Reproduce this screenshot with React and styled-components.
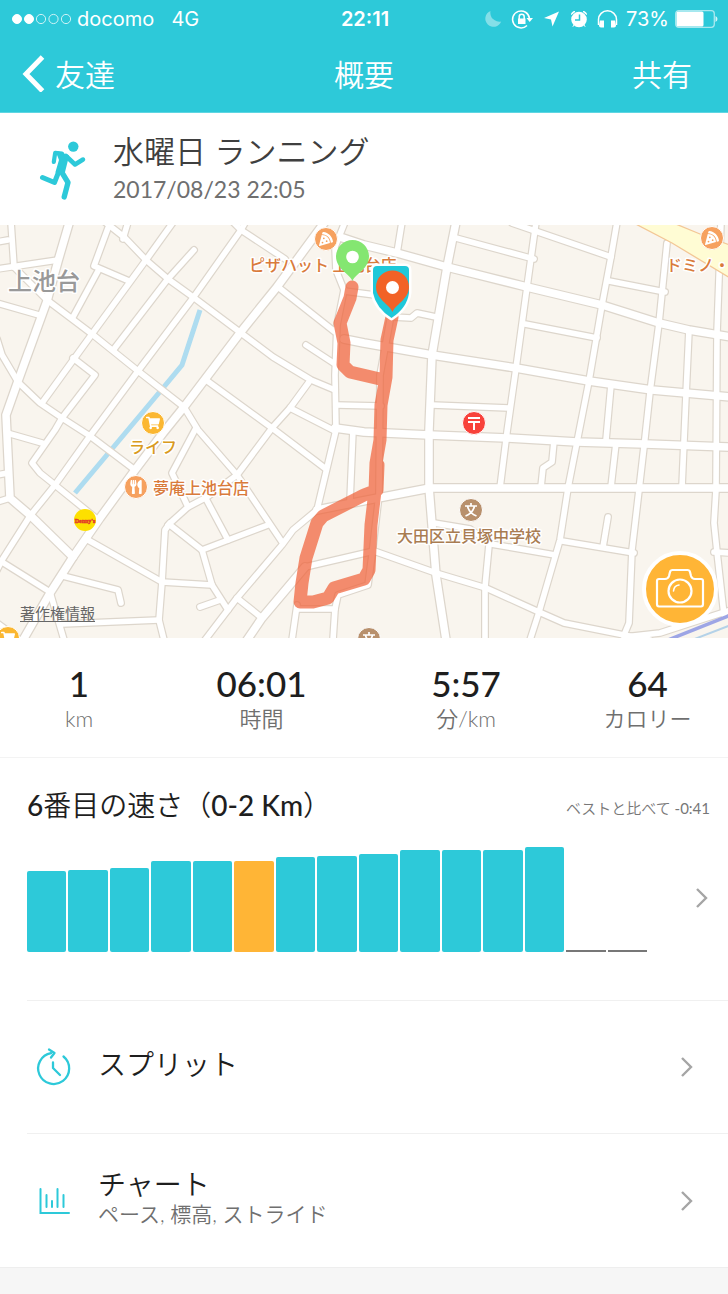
import React from "react";
import styled, { createGlobalStyle } from "styled-components";
import { FaPizzaSlice, FaShoppingCart, FaUtensils } from "react-icons/fa";

const teal = "#2dc9d9";
const amber = "#ffb536";

const GlobalStyle = createGlobalStyle`
  * { box-sizing: border-box; }
  body {
    margin: 0;
    background: #f6f6f6;
    color: #1e1e1e;
    font-family: Lato, "Noto Sans CJK JP", sans-serif;
    font-weight: 350;
  }
  button {
    border: 0;
    padding: 0;
    background: none;
    color: inherit;
    font: inherit;
    text-align: left;
    cursor: pointer;
  }
`;

const Page = styled.main`
  background: #fff;
`;

const TopBar = styled.header`
  background: ${teal};
  color: #fff;
  border-bottom: 1px solid #5fd6e2;
`;

const StatusBar = styled.div`
  display: grid;
  grid-template-columns: 1fr auto 1fr;
  align-items: center;
  height: 37px;
  padding: 0 10px 0 12px;
  font-family: Inter, sans-serif;
  font-size: 20px;
  font-weight: 400;
`;

const StatusGroup = styled.div`
  display: flex;
  align-items: center;
  justify-content: ${(p) => (p.$end ? "flex-end" : "flex-start")};
  gap: ${(p) => p.$gap}px;
`;

const Clock = styled.time`
  font-weight: 600;
`;

const NavBar = styled.nav`
  display: grid;
  grid-template-columns: 1fr auto 1fr;
  align-items: center;
  height: 75px;
  padding: 0 22px 4px;
  font-size: 30px;
`;

const NavButton = styled.button`
  display: flex;
  align-items: center;
  gap: 10px;
  justify-self: ${(p) => (p.$end ? "end" : "start")};
  padding-right: ${(p) => (p.$end ? 14 : 0)}px;
`;

const NavTitle = styled.h1`
  margin: 0;
  font-size: 30px;
  font-weight: 350;
`;

const Activity = styled.section`
  display: flex;
  align-items: center;
  gap: 25px;
  height: 112px;
  padding: 0 40px 0 38px;
`;

const ActivityTitle = styled.h2`
  margin: 0;
  font-size: 31px;
  line-height: 40px;
  font-weight: 350;
  color: #3f3f3f;
`;

const ActivityDate = styled.time`
  display: block;
  font-size: 23px;
  line-height: 36px;
  font-weight: 400;
  color: #6f6f6f;
`;

const MapPanel = styled.section`
  position: relative;
  height: 413px;
  background: #f9f5ee;
`;

const MapCanvas = styled.svg`
  display: block;
  width: 100%;
  height: 100%;
`;

const PlaceLabel = styled.text`
  font-family: "Noto Sans CJK JP", sans-serif;
  font-size: ${(p) => p.$size}px;
  font-weight: 500;
  fill: ${(p) => p.$color};
  stroke: #fff;
  stroke-width: 3px;
  stroke-linejoin: round;
  paint-order: stroke;
`;

const LegalLink = styled.a`
  position: absolute;
  left: 20px;
  bottom: 14px;
  font-family: "Noto Sans CJK JP", sans-serif;
  font-size: 15px;
  line-height: 22px;
  font-weight: 400;
  color: #666;
  text-underline-offset: 2px;
`;

const CameraButton = styled.button`
  position: absolute;
  right: 10px;
  bottom: 11px;
  display: grid;
  place-items: center;
  width: 76px;
  height: 76px;
  border: 4px solid #fff;
  border-radius: 50%;
  background: ${amber};
`;

const Stats = styled.dl`
  display: grid;
  grid-template-columns: 158fr 207fr 202fr 161fr;
  height: 120px;
  margin: 0;
  padding-top: 24px;
  border-bottom: 1px solid #f3f3f3;
  text-align: center;
`;

const Stat = styled.div`
  display: flex;
  flex-direction: column-reverse;
  justify-content: flex-end;
`;

const StatValue = styled.dd`
  margin: 0;
  font-size: 35px;
  line-height: 42px;
  font-weight: 500;
`;

const StatLabel = styled.dt`
  font-size: 22px;
  line-height: 30px;
  color: #6f6f6f;
`;

const Ranking = styled.section`
  height: 242px;
  padding: 28px 18px 0 27px;
`;

const RankingHead = styled.div`
  display: flex;
  justify-content: space-between;
  align-items: center;
`;

const RankingTitle = styled.h2`
  margin: 0;
  font-size: 28px;
  line-height: 38px;
  font-weight: 500;

  span { font-weight: 350; }
`;

const Compare = styled.span`
  padding-top: 4px;
  font-size: 15px;
  font-weight: 400;
  color: #777;

  span { font-weight: 350; }
`;

const ChartButton = styled.button`
  display: flex;
  align-items: center;
  justify-content: space-between;
  gap: 47px;
  width: 100%;
  padding-top: 20px;
`;

const Bars = styled.div`
  flex: 1;
  display: flex;
  align-items: flex-end;
  gap: 2px;
  height: 108px;
`;

const Bar = styled.span`
  flex: 1;
  border-radius: ${(p) => (p.$empty ? 0 : 2)}px;
  background: ${(p) => (p.$empty ? "#777" : p.$active ? amber : teal)};
`;

const Row = styled.button`
  display: flex;
  align-items: center;
  width: calc(100% - 27px);
  height: ${(p) => p.$height}px;
  margin-left: 27px;
  padding: 0 33px 0 8px;
  border-top: 1px solid #f0f0f0;
`;

const RowText = styled.span`
  flex: 1;
  display: flex;
  flex-direction: column;
  padding: 0 0 6px 27px;
`;

const RowTitle = styled.span`
  font-size: 28px;
  line-height: 32px;
`;

const RowNote = styled.span`
  font-size: 21px;
  line-height: 28px;
  color: #6f6f6f;
`;

const PageEnd = styled.footer`
  height: 27px;
  background: #f6f6f6;
  border-top: 1px solid #eee;
`;

const Chevron = () => (
  <svg width="16" height="24" viewBox="0 0 16 24" fill="none" stroke="#a5a5a5" strokeWidth="2.4" aria-hidden="true">
    <path d="M3 3 L12 12 L3 21" />
  </svg>
);

const Signal = () => (
  <svg width="59" height="12" viewBox="0 0 59 12" stroke="#fff" aria-hidden="true">
    <circle cx="5" cy="6" r="4.5" fill="#fff" />
    <circle cx="17" cy="6" r="4.5" fill="#fff" />
    <g fill="none" strokeWidth=".9" opacity=".85">
      <circle cx="29" cy="6" r="4.6" />
      <circle cx="41.500" cy="6" r="4.6" />
      <circle cx="54" cy="6" r="4.6" />
    </g>
  </svg>
);

const StatusIcons = () => (
  <svg width="136" height="24" viewBox="484 6 136 24" aria-hidden="true">
    <path d="M490.500 10 A8.200 8.200 0 1 0 501.200 20.500 A9 9 0 0 1 490.500 10Z" fill="#84dfe8" />
    <g fill="none" stroke="#fff" strokeWidth="1.500">
      <path d="M527 24.500 A8.500 8.500 0 1 1 529.500 17.500" />
      <path d="M519.200 18 V15.800 A2.500 2.500 0 0 1 524.200 15.800 V18" />
    </g>
    <path d="M518 17.500h7.500v5.500h-7.500z M526.500 17h6.500l-3.300 4z" fill="#fff" />
    <path d="M559 10.500 L552.500 25.500 L551 18.500 L544 17Z" fill="#fff" />
    <circle cx="579" cy="18.500" r="7.800" fill="#fff" />
    <path d="M571.500 13.500 a3 3 0 0 1 3.500-3z M586.500 13.500 a3 3 0 0 0-3.500-3z M574 24l-1.200 1.800 M584 24l1.200 1.800" fill="#fff" stroke="#fff" />
    <path d="M579.500 13.500 V19 H575" fill="none" stroke={teal} strokeWidth="1.500" />
    <path d="M598.500 24 V18.500 A9 8.700 0 0 1 616.500 18.500 V24" fill="none" stroke="#fff" strokeWidth="1.500" />
    <path d="M600 19.500h4v7h-3q-2 0-2-2z M611 19.500h4l1 5q0 2-2 2h-3z" fill="#fff" />
  </svg>
);

const Battery = () => (
  <svg width="43" height="18" viewBox="0 0 43 18" aria-hidden="true">
    <rect x=".7" y=".7" width="38.600" height="16.600" rx="3" fill="none" stroke="#a8e8ef" strokeWidth="1.300" />
    <rect x="1.500" y="1.500" width="27" height="15" rx="1.500" fill="#fff" />
    <path d="M40.500 6v6q2-1 2-3t-2-3" fill="#d5f4f7" />
  </svg>
);

const Back = () => (
  <svg width="23" height="38" viewBox="0 0 23 38" fill="none" stroke="#fff" strokeWidth="5" aria-hidden="true">
    <path d="M20.500 3 L4 20 L20.500 37" />
  </svg>
);

const Runner = () => (
  <svg width="50" height="62" viewBox="0 0 50 62" fill="none" stroke={teal} strokeLinecap="round" strokeLinejoin="round" aria-hidden="true">
    <circle cx="35.300" cy="8.600" r="5.200" fill={teal} stroke="none" />
    <path d="M19 14 L30 18 L26 34 L18.500 34 L22 22 Z" fill={teal} strokeWidth="2" />
    <path d="M24 15.500 L17.200 14.800 L15.800 24" strokeWidth="4.200" />
    <path d="M28 18 L37 26.500 L45 21.500" strokeWidth="4.500" />
    <path d="M21 33 L16.500 44.500 L4.500 39.500" strokeWidth="5" />
    <path d="M23 33 L30 44.500 L26.200 59" strokeWidth="5.300" />
  </svg>
);

const SplitIcon = () => (
  <svg width="36" height="40" viewBox="0 0 36 40" fill="none" stroke={teal} strokeWidth="2.300" strokeLinecap="round" strokeLinejoin="round" aria-hidden="true">
    <path d="M28.500 9.500 A15.500 15.500 0 1 1 16 6.200" />
    <path d="M14 2.500 L19.500 6 L16 10.500" />
    <path d="M18 15.500 V21 L25 28" />
  </svg>
);

const BarsIcon = () => (
  <svg width="36" height="30" viewBox="0 0 36 30" fill="none" stroke={teal} strokeWidth="2" strokeLinecap="round" aria-hidden="true">
    <path d="M5.500 3 V27 H34 M11.500 9 V21 M17 15 V21 M22.500 3 V21 M28.500 9 V21" />
  </svg>
);

const CameraIcon = () => (
  <svg width="50" height="42" viewBox="0 0 50 42" fill="none" stroke="#fff" strokeWidth="2.200" strokeLinejoin="round" aria-hidden="true">
    <path d="M2 13 Q2 11 4 11 H10 Q13 11 14 8 L15 4 Q15.500 2 17.500 2 H32.500 Q34.500 2 35 4 L36 8 Q37 11 40 11 H46 Q48 11 48 13 V36 Q48 38.500 46 38.500 H4 Q2 38.500 2 36Z" />
    <circle cx="25" cy="23" r="11.500" />
    <path d="M18.500 23 Q19 17.500 24 17" strokeWidth="1.600" strokeLinecap="round" />
  </svg>
);

const majorRoads = [
  "M70-5 58 36 47 76 18 156 6 190 10 273 31 291 73 332",
  "M327-6 277 62 240 108 184 182 163 208 135 245 100 293 73 332 50 368 23 415",
  "M340 12 364 20 397 28 447 42 527 62 602 80 659 98 689 105 731 112",
  "M344 114 364 118 432 130 516 143 589 156 652 165 731 172",
  "M456-3 447 42 432 130 429 205 429 262 436 350 446 415",
  "M335 203 364 207 429 210 507 213 577 217 645 219 731 222",
  "M731 263H430L378 273 317 285",
  "M305 342 262 393 247 415",
];

const minorRoads = [
  "M11-3 14 42", "M-3 44 58 35", "M14 42 47 75 92 109 138 146 184 182 198 205 237 250 282 317",
  "M-3 78 39 90", "M-3 114 2 130 18 157 40 178 62 193 90 211 135 245",
  "M105-3 124 12 146 35 168 54 193 72 241 108 273 132 311 155 335 165",
  "M128-3 123 14", "M108 3 94 41 129 56", "M98 46 73 92",
  "M174-4 146 35 92 109 42 178", "M194 25 167 55 114 124",
  "M246-4 241 5 193 73 138 146 90 211 55 260 30 291 2 335-3 345",
  "M62 193 55 205 32 238 40 248 55 260 97 294", "M7 208 42 218",
  "M73 133 95 150 62 193", "M233-3 241 5 285 34", "M278 62 335 107",
  "M345-3 335 22 336 45 344 65 337 100 335 150 336 205 317 285 293 305 282 320 237 373 205 415",
  "M402-3 397 28", "M536-3 527 62 516 143 507 207 500 263",
  "M617-3 611 32 602 80 589 156 578 212 568 263 560 315 539 387 530 415",
  "M667 18 659 98 650 167 645 213 639 265 632 325 629 398 624 410",
  "M721-3 717 108 716 265 714 298 717 327 724 390",
  "M689 105 686 170 682 262", "M611 160 606 215", "M616 218 611 262",
  "M456 13 534 34", "M512-2 611 32", "M609 56 665 67", "M525 99 597 113",
  "M432 180 509 183", "M336 180 381 181", "M554 216 552 237 543 243 541 262",
  "M393 92 411 93 417 88 436 92", "M434 298 470 304 491 319 555 330",
  "M489 320 485 362 485 415", "M305 342 374 326 436 348 486 363 539 387 564 398 624 410 650 415",
  "M562 316 634 328", "M714 327 731 328", "M608 292 603 322",
  "M624 412 660 408 700 395 731 385", "M391 90 380 150 379 270 372 330 368 360 338 370 335 384",
  "M344 66 375 70", "M306 120 335 139", "M206 155 272 203 326 244",
  "M309 157 290 183 272 203 237 250", "M290 183 335 206",
  "M196 203 172 248 188 282 168 300", "M188 282 207 272 237 250", "M205 272 228 315",
  "M170 300 202 325 268 300", "M202 325 212 360 228 385", "M200 382 220 375", "M162 357 212 360",
  "M170 298 165 305 162 357 159 395 164 415", "M88 315 162 357", "M63 351 118 365 121 378",
  "M2 337 50 367", "M50 367 64 415", "M62 399 159 395", "M237 373 262 393",
  "M353 205 350 276", "M297 380 292 415", "M297 384H335L333 415", "M-3 277 10 273",
  "M-3 17 8 15", "M-3 250 8 248", "M-3 398 20 415",
];

const route =
  "M352 62 L350 73 L340 98 L344 118 L343 140 L350 147 L380 154 " +
  "M392 92 L387 115 L386 152 L381 180 L380 215 L376 238 L375 266 L371 300 L369 345 L364 354 L334 363 L328 373 L313 377 L300 377 " +
  "L302 358 L306 333 L317 298 L323 291 L364 270 L377 265 L378 240";

const Poi = ({ x, y, color, children }) => (
  <g transform={`translate(${x} ${y})`}>
    <circle r="11.500" fill={color} stroke="#fff" strokeWidth="1" />
    {children}
  </g>
);

const SchoolMark = () => (
  <path d="M0-7V-4M-6-4H6M-3.500-4Q-2 3 5.500 6M3.500-4Q2 3-5.500 6" fill="none" stroke="#fff" strokeWidth="1.700" />
);

const RouteMap = () => (
  <MapCanvas viewBox="0 0 728 413" preserveAspectRatio="xMidYMid slice" role="img" aria-label="ランニングルートの地図">
    <path d="M200 85 182 140 163 163 75 268" fill="none" stroke="#aedcf0" strokeWidth="5" />
    <g fill="none" strokeLinejoin="round" strokeLinecap="round">
      <g stroke="#ddd6cc">
        {majorRoads.map((d) => <path key={d} d={d} strokeWidth="10" />)}
        {minorRoads.map((d) => <path key={d} d={d} strokeWidth="8" />)}
      </g>
      <g stroke="#fff">
        {majorRoads.map((d) => <path key={d} d={d} strokeWidth="7.500" />)}
        {minorRoads.map((d) => <path key={d} d={d} strokeWidth="5.600" />)}
      </g>
    </g>
    <path d="M628-5 672 18 735 56V22L700 9 666-5Z" fill="#fffcd4" stroke="#f3c796" strokeWidth="1.300" />
    <path d="M692 415 731 400" fill="none" stroke="#b4d2e8" strokeWidth="2" />
    <path d="M668 415 731 390" fill="none" stroke="#9da5e5" strokeWidth="3.500" />

    <PlaceLabel x="8" y="65" $size={24} $color="#999">上池台</PlaceLabel>
    <PlaceLabel x="249" y="46" $size={16} $color="#d97b3c">ピザハット 上池台店</PlaceLabel>
    <PlaceLabel x="666" y="46" $size={16} $color="#d97b3c">ドミノ・ピ</PlaceLabel>
    <PlaceLabel x="129" y="228" $size={16} $color="#d99a20">ライフ</PlaceLabel>
    <PlaceLabel x="153" y="269" $size={16} $color="#d97b3c">夢庵上池台店</PlaceLabel>
    <PlaceLabel x="397" y="317" $size={16} $color="#a97c52">大田区立貝塚中学校</PlaceLabel>

    <Poi x={326} y={14} color="#f6a15f"><FaPizzaSlice x="-7" y="-7" size={14} color="#fff" /></Poi>
    <Poi x={712} y={13} color="#f6a15f"><FaPizzaSlice x="-7" y="-7" size={14} color="#fff" /></Poi>
    <Poi x={153} y={198} color="#fbb731"><FaShoppingCart x="-7" y="-7" size={14} color="#fff" /></Poi>
    <Poi x={8} y={413} color="#fbb731"><FaShoppingCart x="-7" y="-7" size={14} color="#fff" /></Poi>
    <Poi x={136} y={262} color="#f6a15f"><FaUtensils x="-7" y="-7" size={14} color="#fff" /></Poi>
    <Poi x={474} y={198} color="#f8423a">
      <path d="M-6-5H6M-6-1H6M0-1V7" fill="none" stroke="#fff" strokeWidth="2" />
    </Poi>
    <Poi x={471} y={285} color="#b8906c"><SchoolMark /></Poi>
    <Poi x={369} y={414} color="#b8906c"><SchoolMark /></Poi>
    <g transform="translate(85 295)">
      <circle r="11" fill="#fde000" />
      <text textAnchor="middle" y="3" fill="#e3352b" stroke="#e3352b" strokeWidth=".4" fontFamily="Liberation Serif, serif" fontWeight="700" fontSize="6">Denny's</text>
    </g>

    <path d={route} fill="none" stroke="#f0643c" strokeOpacity=".73" strokeWidth="13" strokeLinecap="round" strokeLinejoin="round" />

    <path d="M352.500 56 C350 49 336 44 336 31.500 A16.500 16.500 0 0 1 369 31.500 C369 44 355 49 352.500 56Z" fill="#84e671" />
    <circle cx="352.500" cy="32" r="6.300" fill="#fff" />
    <path d="M377 41H405Q409 41 409 45V68Q407 83 391.500 93Q376 83 373 68V45Q373 41 377 41Z" fill="#1fc8d9" stroke="#fff" strokeWidth="5" strokeLinejoin="round" />
    <path d="M377 41H405Q409 41 409 45V68Q407 83 391.500 93Q376 83 373 68V45Q373 41 377 41Z" fill="#1fc8d9" />
    <path d="M392.500 87 C390 80 376 74 376 62 A16.500 16.500 0 0 1 409 62 C409 74 395 80 392.500 87Z" fill="#f26227" />
    <circle cx="392.500" cy="62.500" r="6.500" fill="#fff" />
  </MapCanvas>
);

const stats = [
  { value: "1", label: "km" },
  { value: "06:01", label: "時間" },
  { value: "5:57", label: "分/km" },
  { value: "64", label: "カロリー" },
];

const runs = [81, 82, 84, 91, 91, 91, 95, 96, 98, 102, 102, 102, 105, 0, 0];

export default function App() {
  return (
    <>
      <GlobalStyle />
      <Page>
        <TopBar>
          <StatusBar>
            <StatusGroup $gap={6}>
              <Signal />
              <span>docomo</span>
              <StatusGroup as="span" $gap={0}>&nbsp; 4G</StatusGroup>
            </StatusGroup>
            <Clock>22:11</Clock>
            <StatusGroup $end $gap={6}>
              <StatusIcons />
              <span>73%</span>
              <Battery />
            </StatusGroup>
          </StatusBar>
          <NavBar>
            <NavButton type="button"><Back />友達</NavButton>
            <NavTitle>概要</NavTitle>
            <NavButton type="button" $end>共有</NavButton>
          </NavBar>
        </TopBar>

        <Activity>
          <Runner />
          <div>
            <ActivityTitle>水曜日 ランニング</ActivityTitle>
            <ActivityDate dateTime="2017-08-23T22:05">2017/08/23 22:05</ActivityDate>
          </div>
        </Activity>

        <MapPanel>
          <RouteMap />
          <LegalLink href="#legal">著作権情報</LegalLink>
          <CameraButton type="button" aria-label="写真を撮る"><CameraIcon /></CameraButton>
        </MapPanel>

        <Stats>
          {stats.map((s) => (
            <Stat key={s.label}>
              <StatLabel>{s.label}</StatLabel>
              <StatValue>{s.value}</StatValue>
            </Stat>
          ))}
        </Stats>

        <Ranking>
          <RankingHead>
            <RankingTitle>6<span>番目の速さ（</span>0-2 Km<span>）</span></RankingTitle>
            <Compare><span>ベストと比べて</span> -0:41</Compare>
          </RankingHead>
          <ChartButton type="button" aria-label="記録を見る">
            <Bars>
              {runs.map((height, i) => (
                <Bar key={i} $active={i === 5} $empty={height === 0} style={{ height: height || 2 }} />
              ))}
            </Bars>
            <Chevron />
          </ChartButton>
        </Ranking>

        <Row type="button" $height={133}>
          <SplitIcon />
          <RowText><RowTitle>スプリット</RowTitle></RowText>
          <Chevron />
        </Row>
        <Row type="button" $height={134}>
          <BarsIcon />
          <RowText>
            <RowTitle>チャート</RowTitle>
            <RowNote>ペース, 標高, ストライド</RowNote>
          </RowText>
          <Chevron />
        </Row>
        <PageEnd />
      </Page>
    </>
  );
}
